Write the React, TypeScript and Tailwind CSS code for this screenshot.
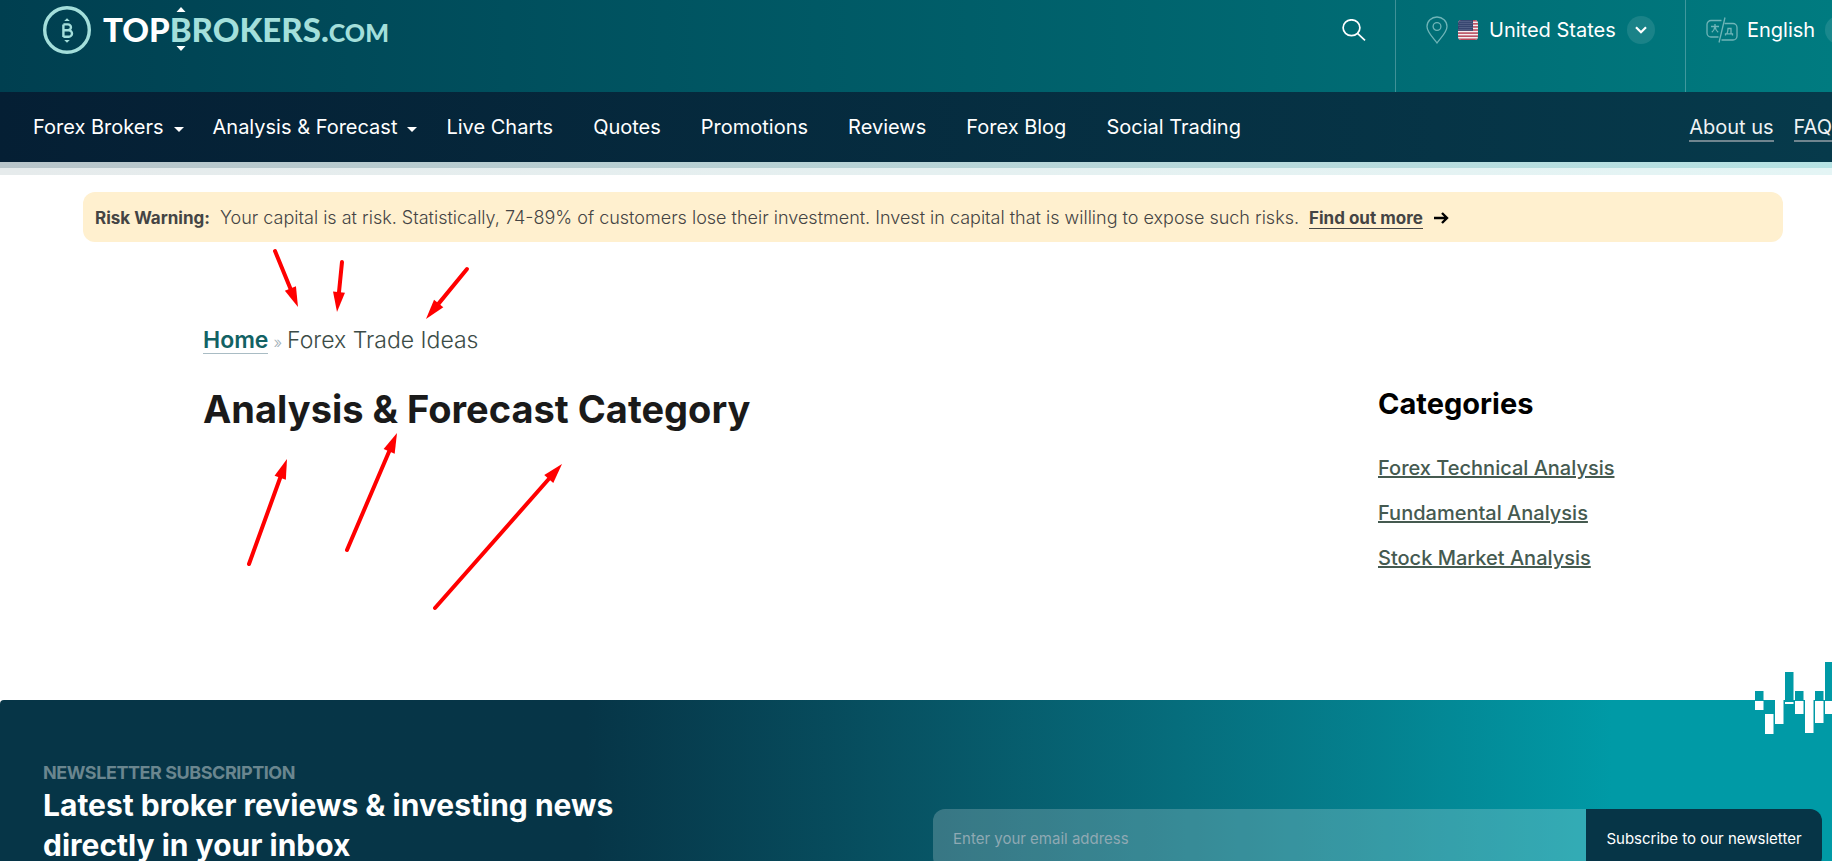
import React from "react";

const navItems = [
  { label: "Forex Brokers", menu: true },
  { label: "Analysis & Forecast", menu: true },
  { label: "Live Charts" },
  { label: "Quotes" },
  { label: "Promotions" },
  { label: "Reviews" },
  { label: "Forex Blog" },
  { label: "Social Trading" },
];

const categories = ["Forex Technical Analysis", "Fundamental Analysis", "Stock Market Analysis"];

const arrows = [
  { from: [275, 76], to: [298, 132] },
  { from: [342, 87], to: [337, 137] },
  { from: [467, 94], to: [426, 144] },
  { from: [249, 389], to: [287, 284] },
  { from: [347, 375], to: [397, 258] },
  { from: [435, 433], to: [562, 289] },
];

function Arrow({ from, to }: { from: number[]; to: number[] }) {
  const dx = to[0] - from[0];
  const dy = to[1] - from[1];
  const len = Math.hypot(dx, dy);
  const ux = dx / len;
  const uy = dy / len;
  const bx = to[0] - ux * 20;
  const by = to[1] - uy * 20;
  const points = `${to[0]},${to[1]} ${bx - uy * 6},${by + ux * 6} ${bx + uy * 6},${by - ux * 6}`;
  return (
    <g>
      <line x1={from[0]} y1={from[1]} x2={bx + ux * 4} y2={by + uy * 4} stroke="#ff0000" strokeWidth="4" strokeLinecap="round" />
      <polygon points={points} fill="#ff0000" />
    </g>
  );
}

function Logo() {
  return (
    <a href="#" aria-label="TopBrokers.com" className="flex items-center gap-3">
      <svg width="48" height="48" viewBox="0 0 48 48" aria-hidden="true">
        <circle cx="24" cy="24" r="22.3" fill="none" stroke="#a3dfdb" strokeWidth="3.4" />
        <path d="M21.2 15 24 12.2 26.8 15z M21.2 34 24 36.8 26.8 34z" fill="#a3dfdb" />
        <path d="M20.4 18.4V31M20.4 18.4H25a2.9 2.9 0 0 1 0 5.9H20.4M25 24.3h.8a3.1 3.1 0 0 1 0 6.4H20.4" fill="none" stroke="#a3dfdb" strokeWidth="2.4" />
      </svg>
      <span className="flex items-baseline font-[Lato] text-[33px] leading-[36px] font-black text-[#a3dfdb]">
        <span className="text-white">TOP</span>
        <span className="relative">
          B
          <svg className="absolute -top-[4px] left-1/2 -translate-x-1/2" width="10" height="5" viewBox="0 0 9 5" aria-hidden="true">
            <path d="M0 5 4.5 0 9 5z" fill="#fff" />
          </svg>
          <svg className="absolute -bottom-[4px] left-1/2 -translate-x-1/2" width="10" height="5" viewBox="0 0 9 5" aria-hidden="true">
            <path d="M0 0H9L4.500 5z" fill="#fff" />
          </svg>
        </span>
        <span>ROKERS.</span>
        <span className="text-[25px]">COM</span>
      </span>
    </a>
  );
}

function PinIcon() {
  return (
    <svg width="22" height="28" viewBox="0 0 22 28" fill="none" stroke="#6fb5b8" strokeWidth="1.3" aria-hidden="true">
      <path d="M11 27C8 22.500 1 16.500 1 10.500a10 9.500 0 0 1 20 0C21 16.500 14 22.500 11 27z" />
      <circle cx="11" cy="10.500" r="3.900" />
    </svg>
  );
}

function Flag() {
  return (
    <svg width="20" height="20" viewBox="0 0 20 20" aria-hidden="true">
      <clipPath id="flag">
        <rect width="20" height="20" rx="3.500" />
      </clipPath>
      <g clipPath="url(#flag)">
        <rect width="20" height="20" fill="#f4eef0" />
        {[0, 1, 2, 3, 4, 5, 6].map((i) => (
          <rect key={i} y={i * 3.08} width="20" height="1.540" fill="#b8475a" />
        ))}
        <rect width="15" height="10.800" fill="#36456f" />
        {[0, 1, 2, 3, 4].map((r) =>
          [0, 1, 2, 3, 4, 5, 6].map((c) => (
            <circle key={`${r}-${c}`} cx={1 + c * 2 + (r % 2)} cy={1.2 + r * 2.1} r="0.45" fill="#a9b3cf" />
          ))
        )}
      </g>
    </svg>
  );
}

function LanguageIcon() {
  return (
    <svg width="32" height="26" viewBox="0 0 32 26" fill="none" stroke="#6fb5b8" strokeWidth="1.300" aria-hidden="true">
      <path d="M15.500 3.500H5a4 4 0 0 0-4 4V16a4 4 0 0 0 4 4h7.500" />
      <path d="M18.500 6.500H27a4 4 0 0 1 4 4V19a4 4 0 0 1-4 4H15.500" />
      <path d="M19 .5 13 25.500" />
      <path d="M5 9.500h8M9 7v2.500M9 9.500c-.4 2.500-1.400 4.300-3.200 5.700M9 9.500c.4 2.500 1.400 4.300 3.200 5.700" />
      <path d="M19.500 18.500v-1.700h7v1.700M21 16.800c.8-1.800 1-3.600 1-5.300h3v5.300" />
    </svg>
  );
}

function Chevron() {
  return (
    <span className="flex size-7 shrink-0 items-center justify-center rounded-full bg-white/10">
      <svg width="12" height="8" viewBox="0 0 12 8" fill="none" stroke="#fff" strokeWidth="2.200" aria-hidden="true">
        <path d="M1 1.200 6 6.200 11 1.200" />
      </svg>
    </span>
  );
}

const bars = [
  { x: 0, up: 9, from: 1, to: 10 },
  { x: 10, up: 0, from: 14, to: 34 },
  { x: 20, up: 0, from: 0, to: 24 },
  { x: 30, up: 28, from: 2, to: 4 },
  { x: 40, up: 9, from: 1, to: 14 },
  { x: 50, up: 0, from: 0, to: 33 },
  { x: 60, up: 9, from: 1, to: 23 },
  { x: 70, up: 38, from: 1, to: 14 },
];

export default function App() {
  return (
    <div className="min-h-screen overflow-hidden bg-white font-[Inter,sans-serif] text-[#444]">
      <header>
        <div className="flex h-[92px] bg-linear-to-r from-[#003f50] to-[#007b80] pl-[43px]">
          <div className="flex flex-1 items-center pb-8">
            <Logo />
            <button type="button" aria-label="Search" className="mr-[29px] ml-auto">
              <svg width="24" height="22" viewBox="0 0 24 22" fill="none" stroke="#fff" strokeWidth="1.700" aria-hidden="true">
                <ellipse cx="9.500" cy="8.700" rx="8.400" ry="7.900" />
                <path d="M15.500 14.300 23 21.300" />
              </svg>
            </button>
          </div>
          <button
            type="button"
            className="flex w-[290px] items-center border-l border-white/25 pb-8 pl-[30px] text-xl text-white"
          >
            <PinIcon />
            <span className="ml-[10px]">
              <Flag />
            </span>
            <span className="mr-[11px] ml-[11px] whitespace-nowrap">United States</span>
            <Chevron />
          </button>
          <button
            type="button"
            className="flex w-[147px] items-center overflow-hidden border-l border-white/25 pb-8 pl-[20px] text-xl text-white"
          >
            <span className="shrink-0">
              <LanguageIcon />
            </span>
            <span className="mr-[10px] ml-[9px] whitespace-nowrap">English</span>
            <Chevron />
          </button>
        </div>
        <nav className="flex h-[70px] items-center bg-linear-to-r from-[#051f34] to-[#063a4b] pl-[33px] text-xl text-white">
          <ul className="flex items-center whitespace-nowrap">
            {navItems.map((item) => (
              <li key={item.label} className={item.menu ? "mr-[29px]" : "mr-10"}>
                <a href="#" className="flex items-center">
                  {item.label}
                  {item.menu && (
                    <svg className="mt-1 ml-[10px]" width="10" height="5" viewBox="0 0 10 5" aria-hidden="true">
                      <path d="M0 0H10L5 5z" fill="#fff" />
                    </svg>
                  )}
                </a>
              </li>
            ))}
          </ul>
          <div className="ml-auto flex gap-5 pt-[2px] whitespace-nowrap">
            <a href="#" className="border-b-2 border-[#70858f] leading-[26px] text-[#eef2f4]">About us</a>
            <a href="#" className="border-b-2 border-[#70858f] leading-[26px] text-[#eef2f4]">FAQ</a>
          </div>
        </nav>
        <div className="h-[6px] bg-linear-to-r from-[#b8c5ca] to-[#b6e3e4]" />
        <div className="h-[7px] bg-linear-to-r from-[#e6ebec] to-[#e4f5f5]" />
      </header>

      <main className="relative h-[525px] pt-[17px]">
        <div className="mr-[49px] ml-[83px] flex h-[50px] items-center rounded-xl bg-[#fff0cf] px-3 pt-[2px] text-lg whitespace-nowrap">
          <strong className="text-[17px] font-bold">Risk Warning:</strong>
          <span className="mx-[10px] font-light">
            Your capital is at risk. Statistically, 74-89% of customers lose their investment. Invest in capital that is
            willing to expose such risks.
          </span>
          <a href="#" className="border-b border-[#444] text-[17px] leading-5 font-bold">Find out more</a>
          <svg className="ml-[11px]" width="15" height="12" viewBox="0 0 15 12" fill="none" stroke="#000" strokeWidth="2.400" aria-hidden="true">
            <path d="M0 6H13M8 1 13 6 8 11" />
          </svg>
        </div>

        <div className="flex pr-[49px] pl-[203px]">
          <div className="flex-1">
            <div className="mt-[85px] flex items-baseline text-[23px] leading-[26px]">
              <a href="#" className="border-b border-[#a9bcc4] font-semibold text-[#126264]">Home</a>
              <span className="mx-[5px] text-base font-light text-[#9fb0b8]">»</span>
              <span className="font-light text-[#3c4c47]">Forex Trade Ideas</span>
            </div>
            <h1 className="mt-[29px] text-[38px] leading-[52px] font-bold text-[#1a1a1a]">Analysis &amp; Forecast Category</h1>
          </div>
          <aside className="mt-[142px] w-[405px]">
            <h2 className="text-[29px] leading-10 font-bold text-black">Categories</h2>
            <ul className="mt-[22px] text-xl leading-[45px] font-medium text-[#455a50]">
              {categories.map((c) => (
                <li key={c}>
                  <a href="#" className="underline">{c}</a>
                </li>
              ))}
            </ul>
          </aside>
        </div>

        <svg className="pointer-events-none absolute top-0 left-0" width="640" height="460" viewBox="0 0 640 460" aria-hidden="true">
          {arrows.map((a, i) => (
            <Arrow key={i} from={a.from} to={a.to} />
          ))}
        </svg>
      </main>

      <section className="relative flex h-[161px] justify-between rounded-tl-sm bg-linear-to-r from-[#063547] from-32% to-[#009aa6] to-88% pr-[10px] pl-[43px]">
        <svg className="absolute -top-[40px] right-0" width="77" height="80" viewBox="0 0 77 80" aria-hidden="true">
          {bars.map((b) => (
            <g key={b.x}>
              <rect x={b.x} y={40 - b.up} width="8.500" height={b.up} fill="#009aa6" />
              <rect x={b.x} y={40 + b.from} width="8.500" height={b.to - b.from} fill="#fff" />
            </g>
          ))}
        </svg>
        <div className="pt-[61px]">
          <p className="text-lg leading-6 font-bold tracking-tight text-[#6a868f]">NEWSLETTER SUBSCRIPTION</p>
          <h2 className="text-[30px] leading-10 font-bold whitespace-nowrap text-white">
            Latest broker reviews &amp; investing news
            <br />
            directly in your inbox
          </h2>
        </div>
        <form className="mt-[109px] flex h-[60px] w-[889px] text-[15px]">
          <input
            type="email"
            aria-label="Email address"
            placeholder="Enter your email address"
            className="min-w-0 flex-1 rounded-l-xl bg-white/20 px-5 placeholder:text-[#8fa9b3]"
          />
          <button type="button" className="w-[236px] rounded-r-xl bg-[#063547] whitespace-nowrap text-white">
            Subscribe to our newsletter
          </button>
        </form>
      </section>
    </div>
  );
}
